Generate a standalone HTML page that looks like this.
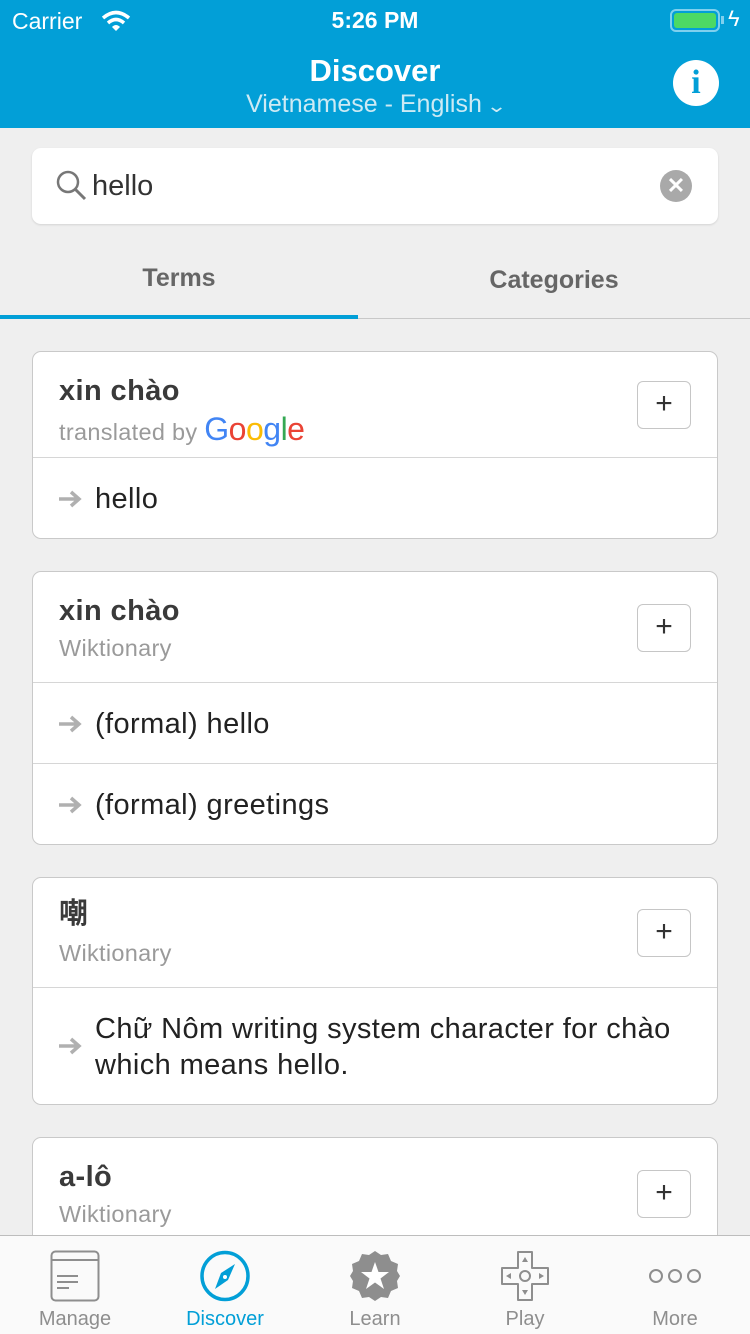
<!DOCTYPE html><html><head><meta charset="utf-8"><style>
*{margin:0;padding:0;box-sizing:border-box}
body{width:750px;height:1334px;background:#efefef;font-family:"Liberation Sans","Noto Sans CJK SC",sans-serif;position:relative;overflow:hidden}
.a{position:absolute}
.hdr{left:0;top:0;width:750px;height:128px;background:#029fd7;color:#fff}
.card{left:32px;width:686px;background:#fff;border:1.5px solid #c9c9c9;border-radius:9px;overflow:hidden}
.t{position:absolute;left:26px;font-size:29px;letter-spacing:0.4px;font-weight:bold;color:#3a3a3a;line-height:1}
.s{position:absolute;left:26px;font-size:23.5px;letter-spacing:0.3px;color:#9a9a9a;line-height:1}
.r{position:absolute;left:62px;font-size:29px;letter-spacing:0.4px;color:#222;line-height:36px;white-space:nowrap}
.ar{position:absolute;left:24px;width:28px;height:20px}
.dv{position:absolute;left:0;width:100%;height:1px;background:#d6d6d6}
.pl{position:absolute;left:604px;width:54px;height:48px;border:1.5px solid #c6c6c6;border-radius:6px;font-size:30px;color:#333;text-align:center;line-height:44px}
.tab{top:1236px;width:150px;height:98px;text-align:center;font-size:20px;color:#8e8e8e}
.tab span{position:absolute;left:0;right:0;top:72px}
</style></head><body>
<svg width="0" height="0" style="position:absolute"><defs><g id="arr"><path d="M2 10H22M14 3L22 10L14 17" stroke="#b0b0b0" stroke-width="3.5" fill="none"/></g></defs></svg>
<div class="a hdr">
<div class="a" style="left:12px;top:8px;font-size:23px">Carrier</div>
<svg class="a" style="left:101px;top:10px" width="30" height="22" viewBox="0 0 30 22"><path d="M2 8 Q15 -3 28 8" stroke="#fff" stroke-width="3.5" fill="none"/><path d="M7 13 Q15 6 23 13" stroke="#fff" stroke-width="3.5" fill="none"/><path d="M11 17 L15 21 L19 17 Q15 13 11 17Z" fill="#fff"/></svg>
<div class="a" style="left:0;width:750px;top:7px;text-align:center;font-size:23px;font-weight:bold">5:26 PM</div>
<div class="a" style="left:670px;top:9px;width:50px;height:23px;border:2px solid #7fd0ee;border-radius:6px;padding:2px"><div style="width:100%;height:100%;background:#4cd964;border-radius:3px"></div></div>
<div class="a" style="left:721px;top:16px;width:3px;height:8px;background:#7fd0ee"></div>
<div class="a" style="left:728px;top:6px;font-size:22px">ϟ</div>
<div class="a" style="left:0;width:750px;top:53px;text-align:center;font-size:31px;font-weight:bold">Discover</div>
<div class="a" style="left:0;width:750px;top:90px;text-align:center;font-size:25px;color:#cdeaf4">Vietnamese - English <span style="font-size:18px;display:inline-block;transform:scaleX(1.4)">⌄</span></div>
<div class="a" style="left:673px;top:60px;width:46px;height:46px;border-radius:50%;background:#fff;color:#029fd7;font:bold 34px 'Liberation Serif',serif;text-align:center;line-height:46px">i</div>
</div>
<div class="a" style="left:32px;top:148px;width:686px;height:76px;background:#fff;border-radius:9px;box-shadow:0 1px 2px rgba(0,0,0,.12)">
<svg class="a" style="left:24px;top:22px" width="32" height="32"><circle cx="12" cy="12" r="10" stroke="#777" stroke-width="2.5" fill="none"/><path d="M19 19 L29 29" stroke="#777" stroke-width="3"/></svg>
<div class="a" style="left:60px;top:22px;font-size:29px;color:#333">hello</div>
<div class="a" style="left:628px;top:22px;width:32px;height:32px;border-radius:50%;background:#a9a9a9;color:#fff;text-align:center;line-height:32px;font-size:22px;font-weight:bold">✕</div>
</div>
<div class="a" style="left:0;width:358px;top:264px;text-align:center;font-size:25px;font-weight:bold;color:#666">Terms</div>
<div class="a" style="left:358px;width:392px;top:266px;text-align:center;font-size:25px;font-weight:bold;color:#666">Categories</div>
<div class="a" style="left:0;top:318px;width:750px;height:1px;background:#c8c8c8"></div>
<div class="a" style="left:0;top:315px;width:358px;height:4px;background:#029fd7"></div>

<div class="a card" style="top:351px;height:188px">
<div class="t" style="top:25px">xin chào</div>
<div class="s" style="top:61px">translated by <span style="font-size:32px;letter-spacing:-0.5px"><span style="color:#4285f4">G</span><span style="color:#ea4335">o</span><span style="color:#fbbc05">o</span><span style="color:#4285f4">g</span><span style="color:#34a853">l</span><span style="color:#ea4335">e</span></span></div>
<div class="pl" style="top:29px">+</div>
<div class="dv" style="top:105px"></div>
<svg class="ar" style="top:137px"><use href="#arr"/></svg><div class="r" style="top:129px">hello</div>
</div>

<div class="a card" style="top:571px;height:274px">
<div class="t" style="top:25px">xin chào</div>
<div class="s" style="top:65px">Wiktionary</div>
<div class="pl" style="top:32px">+</div>
<div class="dv" style="top:110px"></div>
<svg class="ar" style="top:142px"><use href="#arr"/></svg><div class="r" style="top:134px">(formal) hello</div>
<div class="dv" style="top:191px"></div>
<svg class="ar" style="top:223px"><use href="#arr"/></svg><div class="r" style="top:215px">(formal) greetings</div>
</div>

<div class="a card" style="top:877px;height:228px">
<div class="t" style="top:22px">嘲</div>
<div class="s" style="top:64px">Wiktionary</div>
<div class="pl" style="top:31px">+</div>
<div class="dv" style="top:109px"></div>
<svg class="ar" style="top:158px"><use href="#arr"/></svg><div class="r" style="top:133px">Chữ Nôm writing system character for chào<br>which means hello.</div>
</div>

<div class="a card" style="top:1137px;height:160px">
<div class="t" style="top:25px">a-lô</div>
<div class="s" style="top:65px">Wiktionary</div>
<div class="pl" style="top:32px">+</div>
</div>

<div class="a" style="left:0;top:1235px;width:750px;height:99px;background:#fafafa;border-top:1.5px solid #bdbdbd"></div>
<div class="a tab" style="left:0">
<svg class="a" style="left:50px;top:14px" width="50" height="52"><rect x="1.5" y="1.5" width="47" height="49" rx="4" fill="none" stroke="#8e8e8e" stroke-width="2"/><path d="M2 10H48" stroke="#8e8e8e" stroke-width="2"/><path d="M7 26H28M7 32H28M7 38H19" stroke="#8e8e8e" stroke-width="2"/></svg><span>Manage</span></div>
<div class="a tab" style="left:150px;color:#029fd7">
<svg class="a" style="left:50px;top:14px" width="50" height="52"><ellipse cx="25" cy="26" rx="23" ry="23.5" fill="none" stroke="#029fd7" stroke-width="3.5"/><path d="M35 14 L28 30 L15 39 L21 23Z" fill="#029fd7"/><circle cx="25" cy="27" r="2" fill="#fff"/></svg><span>Discover</span></div>
<div class="a tab" style="left:300px">
<svg class="a" style="left:49px;top:14px" width="52" height="52" viewBox="0 0 52 52"><path d="M26 1 L32 5 L39 4 L42 11 L49 14 L48 21 L51 26 L48 31 L49 38 L42 41 L39 48 L32 47 L26 51 L20 47 L13 48 L10 41 L3 38 L4 31 L1 26 L4 21 L3 14 L10 11 L13 4 L20 5Z" fill="#8e8e8e"/><path d="M26 12 L29.5 22 L40 22 L31.5 28.5 L35 39 L26 32.5 L17 39 L20.5 28.5 L12 22 L22.5 22Z" fill="#fff"/></svg><span>Learn</span></div>
<div class="a tab" style="left:450px">
<svg class="a" style="left:50px;top:14px" width="50" height="52"><path d="M18 2H32V18H48V34H32V50H18V34H2V18H18Z" fill="none" stroke="#8e8e8e" stroke-width="2" stroke-linejoin="round"/><circle cx="25" cy="26" r="5" fill="none" stroke="#8e8e8e" stroke-width="2"/><path d="M25 7L28 12H22ZM25 45L28 40H22ZM6 26L11 23V29ZM44 26L39 23V29Z" fill="#8e8e8e"/></svg><span>Play</span></div>
<div class="a tab" style="left:600px">
<svg class="a" style="left:48px;top:30px" width="54" height="20"><circle cx="8" cy="10" r="6" fill="none" stroke="#8e8e8e" stroke-width="2"/><circle cx="27" cy="10" r="6" fill="none" stroke="#8e8e8e" stroke-width="2"/><circle cx="46" cy="10" r="6" fill="none" stroke="#8e8e8e" stroke-width="2"/></svg><span>More</span></div>
</body></html>
